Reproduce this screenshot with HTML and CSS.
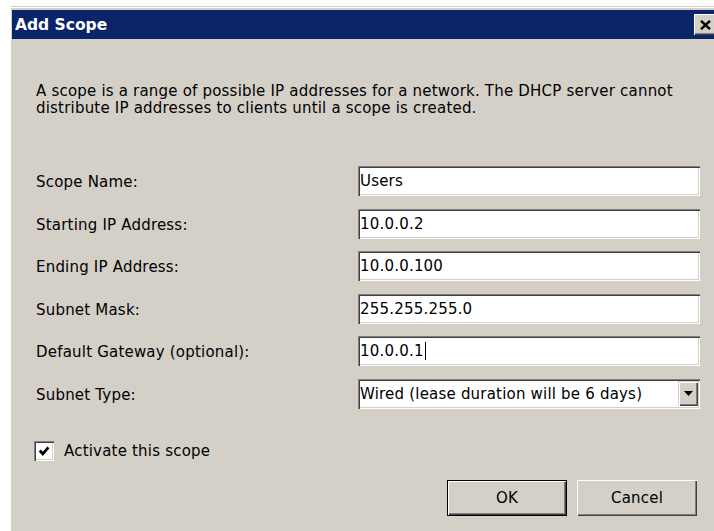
FILE: index.html
```html
<!DOCTYPE html>
<html lang="en">
<head>
<meta charset="utf-8">
<title>Add Scope</title>
<link rel="stylesheet" href="styles.css">
</head>
<body>
<div class="window">
  <div class="titlebar">
    <span class="title">Add Scope</span>
    <button class="close" type="button" aria-label="Close">
      <svg width="11" height="10" viewBox="0 0 11 10"><path d="M1 0.8 L10 9.2 M10 0.8 L1 9.2" stroke="#000" stroke-width="2.4" fill="none"/></svg>
    </button>
  </div>
  <div class="content">
    <p class="intro">A scope is a range of possible IP addresses for a network. The DHCP server cannot<br>distribute IP addresses to clients until a scope is created.</p>
    <div class="form">
      <label class="label">Scope Name:</label>
      <div class="field">Users</div>
      <label class="label">Starting IP Address:</label>
      <div class="field">10.0.0.2</div>
      <label class="label">Ending IP Address:</label>
      <div class="field">10.0.0.100</div>
      <label class="label">Subnet Mask:</label>
      <div class="field">255.255.255.0</div>
      <label class="label">Default Gateway (optional):</label>
      <div class="field">10.0.0.1<span class="caret"></span></div>
      <label class="label">Subnet Type:</label>
      <div class="field select">
        <span class="select-text">Wired (lease duration will be 6 days)</span>
        <span class="arrow">
          <svg width="9" height="5" viewBox="0 0 9 5"><path d="M0 0 H9 L4.5 5 Z" fill="#000"/></svg>
        </span>
      </div>
    </div>
    <div class="check-row">
      <span class="checkbox">
        <svg width="12" height="12" viewBox="0 0 12 12"><path d="M1.8 5.5 L4.8 8.8 L10.4 2.4" stroke="#000" stroke-width="2.8" fill="none"/></svg>
      </span>
      <span class="check-label">Activate this scope</span>
    </div>
    <div class="buttons">
      <button class="btn default" type="button">OK</button>
      <button class="btn" type="button">Cancel</button>
    </div>
  </div>
</div>
</body>
</html>
```
FILE: styles.css
```css
html, body {
  margin: 0;
  padding: 0;
  background: #ffffff;
  height: 531px;
  overflow: hidden;
}

body {
  font-family: "DejaVu Sans", Tahoma, sans-serif;
  font-size: 15px;
  letter-spacing: 0.2px;
  color: #000;
}

/* dialog frame: light outer edge, navy caption, grey client area */
.window {
  margin: 6px 0 0 11px;
  width: 703px;
  height: 525px;
  background: #d4d0c8;
  border-top: 1px solid #d4d0c8;
  box-shadow: inset 0 1px 0 #ffffff;
  padding-top: 3px;
  box-sizing: border-box;
  display: flex;
  flex-direction: column;
}

.titlebar {
  height: 29px;
  margin-left: 1px;
  background: #0a246a;
  display: flex;
  align-items: center;
  justify-content: space-between;
}

.title {
  color: #fff;
  font-weight: bold;
  font-size: 15.5px;
  letter-spacing: 0;
  padding-left: 3px;
}

.close {
  width: 22px;
  height: 21px;
  padding: 0;
  margin: 0 -2px 0 0;
  background: #d4d0c8;
  border: none;
  box-shadow: inset 1px 1px 0 #ffffff, inset -1px -1px 0 #404040, inset -2px -2px 0 #808080;
  display: flex;
  align-items: center;
  justify-content: center;
}

.content {
  flex: 1;
  padding: 44px 14px 0 25px;
  display: flex;
  flex-direction: column;
}

.intro {
  margin: 0;
  line-height: 17px;
  white-space: nowrap;
}

.form {
  margin-top: 49px;
  display: grid;
  grid-template-columns: 322px 342px;
  row-gap: 12.5px;
  align-items: center;
}

.label {
  line-height: 16px;
  padding-top: 2px;
}

/* sunken edit box */
.field {
  height: 30px;
  box-sizing: border-box;
  background: #fff;
  box-shadow: inset 1px 1px 0 #808080, inset 2px 2px 0 #404040, inset -1px -1px 0 #ffffff, inset -2px -2px 0 #d4d0c8;
  padding: 0 4px 0 2px;
  display: flex;
  align-items: center;
  line-height: 16px;
}

.caret {
  display: inline-block;
  width: 1px;
  height: 18px;
  background: #000;
  margin-left: 1px;
}

.select {
  justify-content: space-between;
  padding-right: 2px;
}

.arrow {
  width: 20px;
  height: 25px;
  background: #d4d0c8;
  box-shadow: inset 1px 1px 0 #d4d0c8, inset 2px 2px 0 #ffffff, inset -1px -1px 0 #404040, inset -2px -2px 0 #808080;
  display: flex;
  align-items: center;
  justify-content: center;
}

.check-row {
  margin-top: 32px;
  margin-left: -2px;
  display: flex;
  align-items: center;
  gap: 10px;
  height: 20px;
}

.checkbox {
  width: 20px;
  height: 20px;
  box-sizing: border-box;
  background: #fff;
  box-shadow: inset 1px 1px 0 #808080, inset 2px 2px 0 #404040, inset -1px -1px 0 #ffffff, inset -2px -2px 0 #d4d0c8;
  display: flex;
  align-items: center;
  justify-content: center;
}

.buttons {
  margin-top: 19px;
  margin-right: 3px;
  display: flex;
  justify-content: flex-end;
  gap: 10px;
}

.btn {
  width: 120px;
  height: 36px;
  font-family: inherit;
  font-size: 15px;
  letter-spacing: 0.2px;
  color: #000;
  background: #d4d0c8;
  border: none;
  padding: 0;
  box-shadow: inset 1px 1px 0 #ffffff, inset -1px -1px 0 #404040, inset -2px -2px 0 #808080;
}

.btn.default {
  box-shadow: inset 0 0 0 1px #000, inset 2px 2px 0 #ffffff, inset -2px -2px 0 #404040, inset -3px -3px 0 #808080;
}
```
